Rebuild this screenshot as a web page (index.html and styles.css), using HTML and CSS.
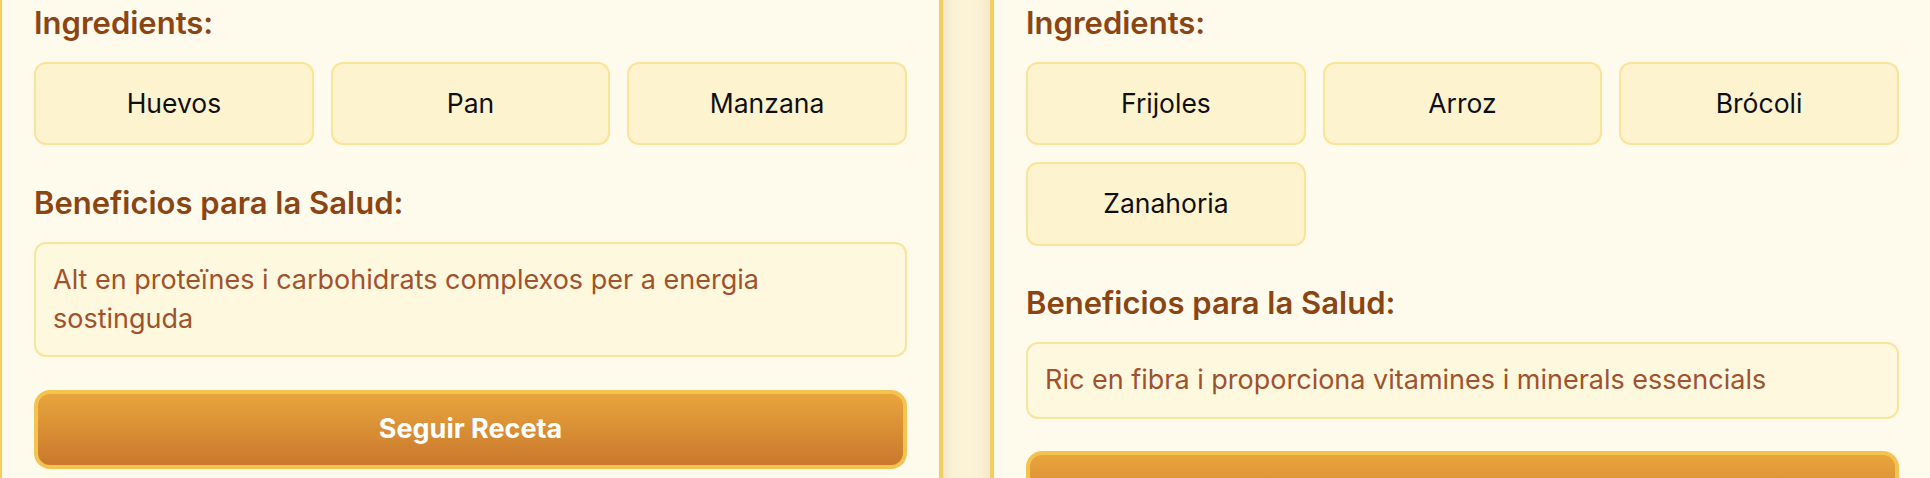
FILE: index.html
```html
<!DOCTYPE html>
<html lang="es">
<head>
<meta charset="utf-8">
<title>Recetas</title>
<link rel="stylesheet" href="styles.css">
</head>
<body>
<div class="cards">
  <article class="card">
    <section class="block">
      <h3 class="block-title">Ingredients:</h3>
      <div class="chips">
        <div class="chip">Huevos</div>
        <div class="chip">Pan</div>
        <div class="chip">Manzana</div>
      </div>
    </section>
    <section class="block">
      <h3 class="block-title">Beneficios para la Salud:</h3>
      <p class="benefit">Alt en proteïnes i carbohidrats complexos per a energia sostinguda</p>
    </section>
    <button class="btn" type="button">Seguir Receta</button>
  </article>
  <article class="card">
    <section class="block">
      <h3 class="block-title">Ingredients:</h3>
      <div class="chips">
        <div class="chip">Frijoles</div>
        <div class="chip">Arroz</div>
        <div class="chip">Brócoli</div>
        <div class="chip">Zanahoria</div>
      </div>
    </section>
    <section class="block">
      <h3 class="block-title">Beneficios para la Salud:</h3>
      <p class="benefit">Ric en fibra i proporciona vitamines i minerals essencials</p>
    </section>
    <button class="btn" type="button">Seguir Receta</button>
  </article>
</div>
</body>
</html>
```
FILE: styles.css
```css
html, body {
  margin: 0;
  padding: 0;
  overflow: hidden;
}
body {
  background: #fcf3d6;
  font-family: Inter, "Noto Sans", "Liberation Sans", sans-serif;
  color: #111;
}
.cards {
  display: grid;
  grid-template-columns: 945px 945px;
  column-gap: 47px;
  margin-left: -2px;
  margin-top: -30px;
  align-items: start;
}
.card {
  box-sizing: border-box;
  background: #fffbec;
  border: 4px solid #f3cf61;
  border-radius: 20px;
  padding: 30px 32px 40px;
  box-shadow: 0 4px 18px rgba(139, 69, 19, 0.12);
  min-height: 560px;
}
.block {
  margin-bottom: 38.5px;
}
.block-title {
  margin: 0 0 21px;
  font-size: 31px;
  line-height: 37px;
  font-weight: 600;
  color: #8b4513;
}
.chips {
  display: grid;
  grid-template-columns: repeat(3, 1fr);
  gap: 16.7px;
}
.chip {
  background: #fdf3cf;
  border: 2px solid #fae39a;
  border-radius: 12px;
  padding: 20px 10px;
  text-align: center;
  font-size: 26.5px;
  line-height: 39.4px;
  color: #0f0f12;
}
.benefit {
  margin: 0;
  background: #fdf8de;
  border: 2px solid #fae39a;
  border-radius: 12px;
  padding: 17px;
  font-size: 27px;
  line-height: 38.6px;
  color: #a0522d;
}
.block + .btn {
  margin-top: -5.8px;
}
.btn {
  display: block;
  width: 100%;
  box-sizing: border-box;
  border: 4px solid #f4c24f;
  border-radius: 16px;
  background: linear-gradient(180deg, #e8a53c 0%, #ca782d 100%);
  color: #fff;
  font-family: inherit;
  font-size: 27px;
  font-weight: 700;
  line-height: 38.6px;
  padding: 16.4px 10px;
  text-align: center;
}
```
